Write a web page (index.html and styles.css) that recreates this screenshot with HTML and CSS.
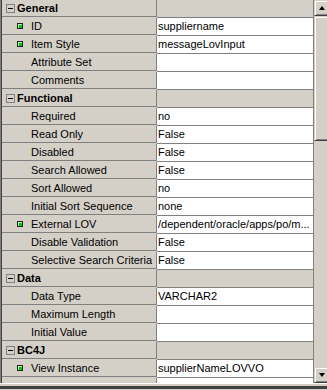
FILE: index.html
```html
<!DOCTYPE html>
<html lang="en">
<head>
    <meta charset="UTF-8">
    <title>Property Inspector</title>
    <link rel="stylesheet" href="styles.css">
</head>
<body>
    <div class="frame">
        <div id="sheet" class="sheet"></div>
        <div class="scrollbar">
            <div class="sb-btn"><span class="arrow-up"></span></div>
            <div class="sb-thumb"></div>
            <div class="sb-track"></div>
            <div class="sb-btn"><span class="arrow-down"></span></div>
        </div>
    </div>
    <div class="bottom-edge"></div>
    <script>
        let groups = [
            { title: "General", props: [
                { name: "ID", value: "suppliername", dot: true },
                { name: "Item Style", value: "messageLovInput", dot: true },
                { name: "Attribute Set", value: "" },
                { name: "Comments", value: "" }
            ]},
            { title: "Functional", props: [
                { name: "Required", value: "no" },
                { name: "Read Only", value: "False" },
                { name: "Disabled", value: "False" },
                { name: "Search Allowed", value: "False" },
                { name: "Sort Allowed", value: "no" },
                { name: "Initial Sort Sequence", value: "none" },
                { name: "External LOV", value: "/dependent/oracle/apps/po/m...", dot: true },
                { name: "Disable Validation", value: "False" },
                { name: "Selective Search Criteria", value: "False" }
            ]},
            { title: "Data", props: [
                { name: "Data Type", value: "VARCHAR2" },
                { name: "Maximum Length", value: "" },
                { name: "Initial Value", value: "" }
            ]},
            { title: "BC4J", props: [
                { name: "View Instance", value: "supplierNameLOVVO", dot: true },
                { name: "", value: "" }
            ]}
        ];

        function displaySheet() {
            let sheet = document.getElementById('sheet');
            groups.forEach(group => {
                let head = document.createElement('div');
                head.classList.add('row', 'cat');
                head.innerHTML = `
                    <div class="name"><span class="toggle"></span><b>${group.title}</b></div>
                    <div class="value"></div>
                `;
                sheet.appendChild(head);
                group.props.forEach(prop => {
                    let row = document.createElement('div');
                    row.classList.add('row');
                    row.innerHTML = `
                        <div class="name"><span class="slot">${prop.dot ? '<span class="dot"></span>' : ''}</span>${prop.name}</div>
                        <div class="value">${prop.value}</div>
                    `;
                    sheet.appendChild(row);
                });
            });
        }

        displaySheet();
    </script>
</body>
</html>
```
FILE: styles.css
```css
body {
    margin: 0;
    background: #d4d0c8;
    font-family: "Liberation Sans", Arial, sans-serif;
    font-size: 11px;
    color: #000;
    overflow: hidden;
    width: 327px;
    height: 390px;
}
.frame {
    display: flex;
    height: 383px;
    overflow: hidden;
}
.sheet {
    width: 311px;
    flex: none;
    border-left: 1px solid #808080;
    box-shadow: inset 1px 0 0 #404040;
    padding-left: 1px;
    border-right: 1px solid #808080;
}
.row {
    display: flex;
    height: 18px;
}
.row .name {
    width: 154px;
    height: 17px;
    line-height: 17px;
    border-right: 1px solid #808080;
    border-bottom: 1px solid #808080;
    padding-left: 15px;
    box-sizing: border-box;
    width: 155px;
    white-space: nowrap;
    overflow: hidden;
    display: flex;
    align-items: center;
}
.row .value {
    width: 156px;
    height: 17px;
    line-height: 17px;
    border-bottom: 1px solid #808080;
    background: #fff;
    padding-left: 1px;
    box-sizing: content-box;
    width: 155px;
    white-space: nowrap;
    overflow: hidden;
}
.row.cat .name {
    padding-left: 4px;
}
.row.cat .value {
    background: #d4d0c8;
}
.toggle {
    width: 7px;
    height: 7px;
    border: 1px solid #808080;
    margin-right: 2px;
    position: relative;
    flex: none;
}
.toggle::after {
    content: "";
    position: absolute;
    left: 1px;
    top: 3px;
    width: 5px;
    height: 1px;
    background: #000;
}
.slot {
    width: 14px;
    height: 17px;
    flex: none;
    display: flex;
    align-items: center;
}
.dot {
    width: 4px;
    height: 4px;
    margin-top: -1px;
    border: 1px solid #202020;
    background: #00c800;
    box-shadow: inset 1px 1px 0 #b8ffb8;
}
.scrollbar {
    width: 16px;
    flex: none;
    display: flex;
    flex-direction: column;
}
.sb-btn,
.sb-thumb {
    border: 1px solid;
    border-color: #d4d0c8 #404040 #404040 #d4d0c8;
    box-shadow: inset 1px 1px 0 #fff, inset -1px -1px 0 #808080;
    background: #d4d0c8;
    flex: none;
}
.sb-btn {
    height: 14px;
    display: flex;
    justify-content: center;
    align-items: center;
}
.sb-thumb {
    height: 123px;
}
.sb-track {
    flex: 1;
    background: #d4d0c8;
}
.arrow-up {
    border-left: 3.5px solid transparent;
    border-right: 3.5px solid transparent;
    border-bottom: 4px solid #000;
}
.arrow-down {
    border-left: 3.5px solid transparent;
    border-right: 3.5px solid transparent;
    border-top: 4px solid #000;
}
.bottom-edge {
    height: 2px;
    border-top: 1px solid #fff;
    border-bottom: 1px solid #808080;
    box-shadow: inset 0 -1px 0 #d4d0c8;
    margin-top: 0;
    background: #d4d0c8;
    border-bottom-width: 3px;
    border-bottom-color: #404040;
}
```
